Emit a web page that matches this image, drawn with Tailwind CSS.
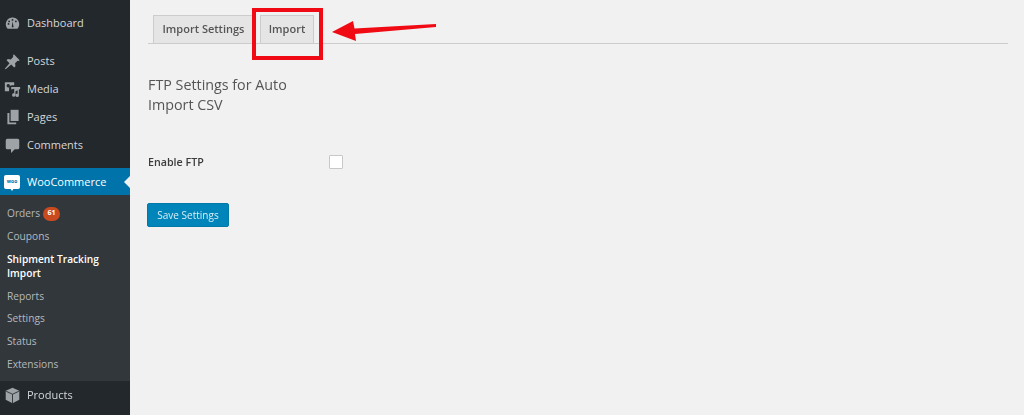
<!DOCTYPE html>
<html lang="en">
<head>
  <meta charset="UTF-8">
  <title>Shipment Tracking Import</title>
  <script src="https://cdn.jsdelivr.net/npm/@tailwindcss/browser@4"></script>
</head>
<body class="bg-[#f1f1f1] overflow-hidden font-['Open_Sans',sans-serif]">
  <div class="flex h-[415px] w-[1024px] relative blur-[0.5px]">
    <!-- sidebar -->
    <aside class="w-[130px] shrink-0 bg-[#23282d] text-[11px] text-[#d5d7d9] flex flex-col">
      <div class="h-[47px] pt-[15px] flex items-start">
        <span class="w-[27px] pl-[5px] pt-[1px]">
          <svg class="w-[15px] h-[15px]" viewBox="0 0 20 20" fill="#9ea3a8"><path d="M10 2a9 9 0 0 0-8 13l1.500 2h13l1.500-2A9 9 0 0 0 10 2zm0 2a1.200 1.200 0 1 1 0 2.400A1.200 1.200 0 0 1 10 4zM5.500 6a1.200 1.200 0 1 1 0 2.400 1.200 1.200 0 0 1 0-2.400zm9 0a1.200 1.200 0 1 1 0 2.400 1.200 1.200 0 0 1 0-2.400zM3.500 10.500a1.200 1.200 0 1 1 2.400 0 1.200 1.200 0 0 1-2.400 0zM9 15l1-8 1.500 8z"/></svg>
        </span>
        <span>Dashboard</span>
      </div>
      <div class="h-[28px] flex items-center">
        <span class="w-[27px] pl-[4px]"><svg class="w-[17px] h-[17px]" viewBox="0 0 20 20" fill="#9ea3a8"><path d="M11.500 1.500l7 7-1.500 1-1-.5-3 3 .5 3.500-1.500 1.500-3.500-3.500L2 19l-1-.5 5.500-6.500L3 8.500 4.500 7l3.500.5 3-3-.5-1z"/></svg></span>
        <span>Posts</span>
      </div>
      <div class="h-[28px] flex items-center">
        <span class="w-[27px] pl-[4px]"><svg class="w-[17px] h-[17px]" viewBox="0 0 20 20" fill="#9ea3a8"><path d="M1 1.500h11v3.500H9.500A3.500 3.500 0 0 0 6 8.500V12H1zm4 2a2 2 0 1 0 0 4 2 2 0 0 0 0-4zm3.500 3.500H19v2.500l-1.500.5v7a2 2 0 1 1-1.500-2v-4l-2.500 1v4.500a2 2 0 1 1-1.500-2V9L8.500 10z"/></svg></span>
        <span>Media</span>
      </div>
      <div class="h-[28px] flex items-center">
        <span class="w-[27px] pl-[5px]"><svg class="w-[16px] h-[16px]" viewBox="0 0 20 20" fill="#9ea3a8"><path d="M7 1h10v14H7z"/><path d="M3 5h2.500v12H14v2H3z"/></svg></span>
        <span>Pages</span>
      </div>
      <div class="h-[29px] flex items-center">
        <span class="w-[27px] pl-[5px]"><svg class="w-[15px] h-[15px]" viewBox="0 0 20 20" fill="#9ea3a8"><path d="M3 1h14a2 2 0 0 1 2 2v10a2 2 0 0 1-2 2h-4l-5 5v-5H3a2 2 0 0 1-2-2V3a2 2 0 0 1 2-2z"/></svg></span>
        <span>Comments</span>
      </div>
      <div class="mt-[8px] h-[27px] bg-[#0073aa] text-white flex items-center relative">
        <span class="w-[27px] pl-[4px] relative">
          <span class="flex w-[16px] h-[14px] rounded-[2px] bg-white items-center justify-center text-[5px] font-bold text-[#0073aa] leading-none">woo</span>
          <span class="absolute left-[10px] top-[13px] border-x-[2px] border-x-transparent border-t-[3px] border-t-white"></span>
        </span>
        <span class="pt-px">WooCommerce</span>
        <span class="absolute right-0 top-[8px] border-y-[6px] border-y-transparent border-r-[6px] border-r-[#f1f1f1]"></span>
      </div>
      <div class="bg-[#32373c] text-[10.2px] text-[#b4b9be] h-[186px] pl-[7px] pt-[7px]">
        <div class="h-[23px] flex items-center gap-[3px]">Orders <span class="w-[17px] h-[14px] rounded-full bg-[#ca4a1f] text-white text-[7px] font-bold flex items-center justify-center">61</span></div>
        <div class="h-[23px] flex items-center">Coupons</div>
        <div class="h-[37px] pt-[4px] leading-[14px] font-semibold text-white">Shipment Tracking<br>Import</div>
        <div class="h-[23px] flex items-center">Reports</div>
        <div class="h-[22px] flex items-center">Settings</div>
        <div class="h-[23px] flex items-center">Status</div>
        <div class="h-[23px] flex items-center">Extensions</div>
      </div>
      <div class="h-[29px] flex items-center">
        <span class="w-[27px] pl-[4px]"><svg class="w-[17px] h-[17px]" viewBox="0 0 20 20"><path d="M10 1l8 3.500v10.500L10 19l-8-4V4.500z" fill="#9ea3a8"/><path d="M2.500 5L10 8.500 17.500 5M10 8.500V19" stroke="#23282d" fill="none"/></svg></span>
        <span>Products</span>
      </div>
    </aside>

    <!-- content -->
    <main class="flex-1 pl-[18px] pr-[16px] text-[#444]">
      <div class="pt-[15px] flex gap-[6px] pl-[5px] border-b border-[#ccc] h-[44px] items-end">
        <div class="h-[29px] w-[101px] -mb-px border border-[#ccc] bg-[#e5e5e5] text-[#555] text-[11px] font-semibold flex items-center justify-center">Import Settings</div>
        <div class="h-[29px] w-[54px] -mb-px border border-[#ccc] bg-[#e5e5e5] text-[#555] text-[11px] font-semibold flex items-center justify-center">Import</div>
      </div>
      <h2 class="mt-[31px] w-[170px] text-[14.3px] leading-[19.5px] text-[#555]">FTP Settings for Auto Import CSV</h2>
      <div class="mt-[38px] flex items-center h-[20px]">
        <span class="w-[181px] text-[10.7px] font-semibold text-[#3c3c3c]">Enable FTP</span>
        <span class="w-[14px] h-[14px] border border-[#c8c8c8] bg-white rounded-[1px]"></span>
      </div>
      <button class="mt-[31px] -ml-px block w-[82px] h-[24px] rounded-[2px] bg-[#0085ba] border border-[#0078a8] text-white/85 text-[10px] font-medium">Save Settings</button>
    </main>

    <!-- annotation over the screenshot -->
    <div class="absolute left-[252px] top-[8px] w-[71px] h-[52px] border-[4px] border-[#f00a14]"></div>
    <svg class="absolute left-[330px] top-[18px] w-[110px] h-[28px]" viewBox="0 0 110 28">
      <path d="M2 14L23 3l1.500 7.500L106 6v3L25 16l1 7z" fill="#f00a14"/>
    </svg>
  </div>
</body>
</html>
